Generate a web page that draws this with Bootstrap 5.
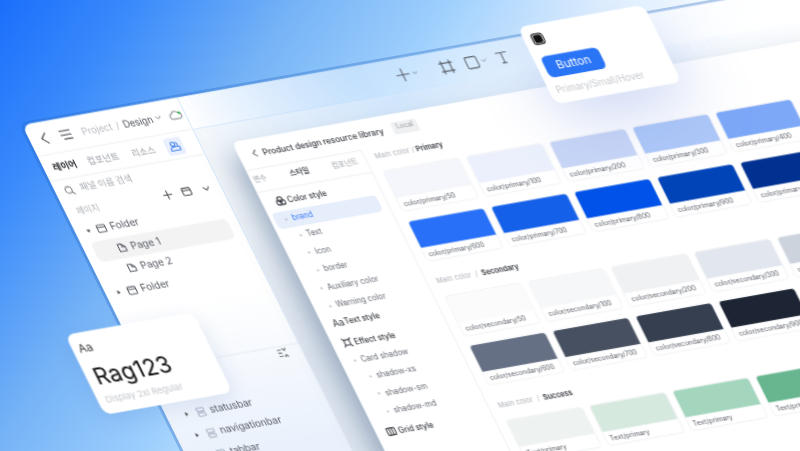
<!DOCTYPE html>
<html lang="ko">
<head>
<meta charset="UTF-8">
<meta name="viewport" content="width=device-width, initial-scale=1">
<title>Design system</title>
<link href="https://cdn.jsdelivr.net/npm/bootstrap@5.3.0/dist/css/bootstrap.min.css" rel="stylesheet">
<style>
html, body { margin: 0; height: 100%; }
body {
    width: 800px; height: 451px; overflow: hidden; position: relative;
    font-family: "Inter", "Noto Sans CJK KR", sans-serif; color: #3c4048;
    background: linear-gradient(124deg, #1b6efb 0%, #3c8cfb 13%, #76b3f6 27%, #9fd0fd 41%, #e2f1ff 55%, #fff 72%);
}
svg { display: block; flex: none; fill: none; stroke: currentColor; stroke-width: 1; stroke-linecap: round; stroke-linejoin: round; }

/* the whole picture is one skewed canvas */
.scene { position: absolute; left: 22px; top: 125px; width: 0; height: 0; transform-origin: 0 0; transform: matrix(1, -.1775, .495, 1, 0, 0); filter: blur(.35px); }

.win { position: absolute; left: 0; top: 0; width: 1000px; height: 560px; display: flex; border-radius: 8px; box-shadow: 0 0 0 3px rgba(30, 95, 190, .32); }
.side { width: 155px; flex: none; background: linear-gradient(180deg, #fff 0, #fff 190px, #e9f1fc 340px); border-radius: 8px 0 0 8px; }
.side-head { height: 32px; padding-left: 10px; border-bottom: 1px solid #f0f1f3; font-size: 9px; color: #4b4f57; }
.side-tabs { height: 25px; padding-left: 9px; border-bottom: 1px solid #f0f1f3; font-size: 8.5px; color: #9da1a8; }
.side-tabs b { color: #23262b; font-weight: 600; }
.side-search { height: 21px; padding-left: 9px; font-size: 8.5px; color: #a8abb1; }
.side-actions { height: 20px; padding: 0 10px 0 11px; font-size: 8px; color: #b0b3b9; white-space: nowrap; }
.tree-row { height: 20.5px; font-size: 9.5px; color: #555961; }
.tri { width: 0; height: 0; border-left: 2px solid transparent; border-right: 2px solid transparent; border-top: 3px solid #555; margin-right: 6px; flex: none; }
.tri-r { transform: rotate(-90deg); }
.tree-on { background: #f3f3f4; border-radius: 5px; margin: 0 10px 0 9px; }
.side-low { margin-top: 65px; border-top: 1px solid #e8edf4; padding-top: 28px; }
.low-row { height: 21px; padding-left: 18px; font-size: 9.5px; color: #555961; }
.low-icon { color: #a9b2c2; }

.main-col { flex: 1; min-width: 0; display: flex; flex-direction: column; }
.toolbar { height: 32px; flex: none; padding-left: 211px; color: #555b63; background: linear-gradient(90deg, #fff 0, rgba(255, 255, 255, .45) 170px, rgba(255, 255, 255, .42) 420px, #fff 640px); }
.stage { flex: 1; min-height: 0; padding: 18px 0 0 30px; background: linear-gradient(180deg, rgba(222, 230, 240, 0) 0, #dde5ef 230px), linear-gradient(90deg, #f5f8fb 0, rgba(226, 238, 252, .75) 200px, rgba(236, 244, 253, .75) 420px, #fff 640px); }

.lib { width: 640px; height: 500px; background: #fff; border-radius: 6px 0 0 0; box-shadow: -8px 14px 24px rgba(80, 105, 140, .5); }
.lib-head { height: 28px; padding-left: 13px; font-size: 8px; font-weight: 500; color: #33363c; }
.tag-local { background: #eff0f2; color: #9a9da4; font-size: 6.5px; font-weight: 400; padding: 1px 4px; border-radius: 2px; margin-left: 10px; }
.lib-box { margin-left: auto; margin-right: 45px; width: 14px; height: 14px; border: 1px solid #e4e6ea; border-radius: 2px; }
.lib-side { width: 116px; flex: none; border-top: 1px solid #f0f1f3; border-right: 1px solid #f0f1f3; font-size: 7.5px; color: #6a6e76; }
.lib-tabs { height: 22px; padding: 0 8px 0 3px; border-bottom: 1px solid #f0f1f3; font-size: 7px; color: #a0a3a9; margin-bottom: 2.5px; }
.lib-tabs b { font-weight: 500; color: #2d3036; }
.style-row { height: 17.4px; padding-left: 13px; }
.style-head { color: #33363c; font-weight: 500; }
.style-head svg { margin-right: 2px; }
.tri-sm { width: 2px; height: 2px; border-radius: 50%; background: #b8bbc1; margin-right: 5px; flex: none; }
.sub1 { padding-left: 20px; }
.style-on { background: #e6eefc; color: #3b7cf5; border-radius: 4px; margin: 0 7px 0 4px; padding-left: 10px; height: 16px; margin-top: .7px; margin-bottom: .7px; }

.lib-main { padding-left: 9px; }
.sec-label { height: 14px; font-size: 7px; color: #b2b5bb; margin-bottom: 7px; margin-top: 2px; }
.sec-label b { font-weight: 600; color: #33363c; }
.sec-gap { margin-top: 13px; }
.tile-grid { display: grid; grid-template-columns: repeat(5, 77px); gap: 8.5px 6px; }
.tile { height: 41px; background: #fff; border: 1px solid #f3f4f6; border-radius: 4px; overflow: hidden; font-size: 6.5px; color: #5c6068; }
.tile i { display: block; height: 27px; margin: -1px -1px 0; }
.tile span { display: block; padding: 3px 0 0 4px; white-space: nowrap; }

.float { position: absolute; background: #fff; border-radius: 8px; }
.rag { left: -56px; top: 200px; width: 128px; height: 80px; padding: 9px 8px; box-shadow: 0 6px 20px rgba(60, 100, 170, .14); }
.rag-aa { font-size: 11px; line-height: 13px; color: #333; margin-left: -2px; }
.rag-big { font-size: 22px; line-height: 30px; color: #111; margin-top: 6px; }
.rag-sub { font-size: 8.5px; color: #c4c7cc; margin-top: 2px; white-space: nowrap; }
.btn-card { left: 500px; top: -9px; width: 126px; height: 77px; padding: 8px 7px; box-shadow: 0 22px 60px rgba(110, 140, 225, .32); }
.btn-demo { background: #2a74f6; border: 0; color: #fff; font-size: 11px; width: 57px; height: 21px; padding: 0; border-radius: 5px; margin-top: 11px; display: block; }
.btn-sub { font-size: 9px; color: #c6c9ce; margin-top: 5px; white-space: nowrap; }
</style>
</head>
<body>

<svg width="0" height="0" style="position:absolute">
    <symbol id="ico-folder" viewBox="0 0 10 10"><path d="M1 2.5a1 1 0 0 1 1-1h6a1 1 0 0 1 1 1v5a1 1 0 0 1-1 1H2a1 1 0 0 1-1-1zM1 3.8h8"/></symbol>
    <symbol id="ico-page" viewBox="0 0 10 10"><path d="M2 1.5h3.5L8.5 4.5v4h-6.5zM5.5 1.5v3h3"/></symbol>
    <symbol id="ico-bars" viewBox="0 0 10 10"><rect x="1.5" y="1" width="7" height="3.2" rx=".8"/><rect x="1.5" y="5.8" width="7" height="3.2" rx=".8"/></symbol>
    <symbol id="ico-down" viewBox="0 0 10 10"><path d="M2 3.5l3 3 3-3"/></symbol>
</svg>

<div class="scene">
    <div class="win">
        <!-- left panel -->
        <div class="side">
            <div class="side-head d-flex align-items-center">
                <svg width="9" height="12" viewBox="0 0 9 12" style="color:#33363c"><path d="M7 1L2 6l5 5"/></svg>
                <svg width="12" height="10" viewBox="0 0 12 10" style="margin-left:11px;color:#33363c"><path d="M1 1h10M1 5h10M3 9h8"/></svg>
                <span style="margin-left:10px;color:#b7bac0">Project</span>
                <span style="margin-left:4px;color:#b7bac0">/</span>
                <span style="margin-left:4px">Design</span>
                <svg width="7" height="7" viewBox="0 0 10 10" style="margin-left:2px"><use href="#ico-down"/></svg>
                <svg width="13" height="10" viewBox="0 0 13 10" style="margin-left:7px;color:#8f939a"><path d="M3.5 8.5a2.5 2.5 0 0 1-.3-5 3.2 3.2 0 0 1 6-.6 2.8 2.8 0 0 1 .3 5.6z"/><circle cx="10.8" cy="3.2" r="1.2" fill="#37b24d" stroke="none"/></svg>
            </div>
            <div class="side-tabs d-flex align-items-center">
                <b>레이어</b>
                <span style="margin-left:11px">컴포넌트</span>
                <span style="margin-left:13px">리소스</span>
                <span class="d-flex align-items-center justify-content-center" style="margin-left:11px;width:17px;height:17px;border-radius:3px;background:#e9f0fd;color:#3d7ff0">
                    <svg width="11" height="11" viewBox="0 0 11 11"><circle cx="4.5" cy="3.2" r="2"/><path d="M1 9.5c0-2 1.2-3.5 3.5-3.5h5.5v3.5zM7.5 2a2 2 0 0 1 1 2.8"/></svg>
                </span>
            </div>
            <div class="side-search d-flex align-items-center">
                <svg width="10" height="10" viewBox="0 0 10 10" style="color:#777"><circle cx="4.3" cy="4.3" r="3.2"/><path d="M6.8 6.8L9 9"/></svg>
                <span style="margin-left:6px">패널 이름 검색</span>
            </div>
            <div class="side-actions d-flex align-items-center">
                <span>페이지</span>
                <svg width="10" height="10" viewBox="0 0 10 10" style="margin-left:64px;color:#444"><path d="M5 1v8M1 5h8"/></svg>
                <svg width="10" height="10" viewBox="0 0 10 10" style="margin-left:9px;color:#444"><use href="#ico-folder"/></svg>
                <svg width="9" height="9" viewBox="0 0 10 10" style="margin-left:10px;color:#444"><use href="#ico-down"/></svg>
            </div>
            <div class="tree-row d-flex align-items-center" style="padding-left:11px"><span class="tri"></span><svg width="10" height="10" viewBox="0 0 10 10" class="me-1"><use href="#ico-folder"/></svg>Folder</div>
            <div class="tree-row tree-on d-flex align-items-center" style="padding-left:22px"><svg width="10" height="10" viewBox="0 0 10 10" class="me-1"><use href="#ico-page"/></svg>Page 1</div>
            <div class="tree-row d-flex align-items-center" style="padding-left:31px"><svg width="10" height="10" viewBox="0 0 10 10" class="me-1"><use href="#ico-page"/></svg>Page 2</div>
            <div class="tree-row d-flex align-items-center" style="padding-left:11px"><span class="tri tri-r"></span><svg width="10" height="10" viewBox="0 0 10 10" class="me-1"><use href="#ico-folder"/></svg>Folder</div>
            <div class="side-low">
                <svg width="10" height="10" viewBox="0 0 10 10" style="position:absolute;left:131px;top:247px;color:#666"><path d="M1 2h3M1 5h3M1 8h3M6 1l1.5 2L9 1M6 9l1.5-2L9 9"/></svg>
                <div style="height:8px"></div>
                <div class="low-row d-flex align-items-center"><span class="tri tri-r" style="margin-right:7px"></span><svg width="10" height="10" viewBox="0 0 10 10" class="low-icon me-1"><use href="#ico-bars"/></svg>statusbar</div>
                <div class="low-row d-flex align-items-center"><span class="tri tri-r" style="margin-right:7px"></span><svg width="10" height="10" viewBox="0 0 10 10" class="low-icon me-1"><use href="#ico-bars"/></svg>navigationbar</div>
                <div class="low-row d-flex align-items-center"><span class="tri tri-r" style="margin-right:7px"></span><svg width="10" height="10" viewBox="0 0 10 10" class="low-icon me-1"><use href="#ico-bars"/></svg>tabbar</div>
            </div>
        </div>

        <div class="main-col">
            <div class="toolbar d-flex align-items-center">
                <svg width="14" height="14" viewBox="0 0 14 14"><path d="M7 1v12M1 7h12"/></svg>
                <svg width="6" height="6" viewBox="0 0 10 10" style="margin-left:2px"><use href="#ico-down"/></svg>
                <svg width="14" height="14" viewBox="0 0 14 14" style="margin-left:22px"><path d="M3 .8v12.4M11 .8v12.4M.8 3h12.4M.8 11h12.4" stroke-width="1.1"/></svg>
                <svg width="14" height="14" viewBox="0 0 14 14" style="margin-left:11px"><rect x="1.5" y="1.5" width="11" height="11" rx="1.5"/></svg>
                <svg width="6" height="6" viewBox="0 0 10 10" style="margin-left:2px"><use href="#ico-down"/></svg>
                <svg width="13" height="13" viewBox="0 0 13 13" style="margin-left:9px"><path d="M1.5 1.5h10M6.5 1.5v10M4.5 11.5h4"/></svg>
            </div>
            <div class="stage">
                <div class="lib">
                    <div class="lib-head d-flex align-items-center">
                        <svg width="6" height="8" viewBox="0 0 6 8" style="margin-right:5px;color:#666"><path d="M4.5 1L1.5 4l3 3"/></svg>
                        <span>Product design resource library</span>
                        <span class="tag-local">Local</span>
                        <span class="lib-box"></span>
                    </div>
                    <div class="d-flex">
                        <div class="lib-side">
                            <div class="lib-tabs d-flex align-items-center justify-content-between">
                                <span>변수</span><b>스타일</b><span>컴포넌트</span>
                            </div>
                            <div class="style-row style-head d-flex align-items-center">
                                <svg width="10" height="10" viewBox="0 0 10 10" stroke-width=".8"><circle cx="5" cy="3.4" r="2.4"/><circle cx="3.2" cy="6.4" r="2.4"/><circle cx="6.8" cy="6.4" r="2.4"/></svg>Color style
                            </div>
                            <div class="style-row style-on d-flex align-items-center"><span class="tri-sm"></span>brand</div>
                            <div class="style-row sub1 d-flex align-items-center"><span class="tri-sm"></span>Text</div>
                            <div class="style-row sub1 d-flex align-items-center"><span class="tri-sm"></span>Icon</div>
                            <div class="style-row sub1 d-flex align-items-center"><span class="tri-sm"></span>border</div>
                            <div class="style-row d-flex align-items-center" style="padding-left:15px"><span class="tri-sm"></span>Auxiliary color</div>
                            <div class="style-row d-flex align-items-center" style="padding-left:15px"><span class="tri-sm"></span>Warning color</div>
                            <div class="style-row style-head d-flex align-items-center"><span style="font-size:9px;font-weight:400;margin-right:2px;width:10px;margin-left:-3px">Aa</span>Text style</div>
                            <div class="style-row style-head d-flex align-items-center" style="margin-top:2px">
                                <svg width="10" height="10" viewBox="0 0 10 10" stroke-width=".8" style="margin-left:-3px"><path d="M2.5 2.5h5v5h-5zM1 1l1.5 1.5M9 1L7.5 2.5M1 9l1.5-1.5M9 9L7.5 7.5"/></svg>Effect style
                            </div>
                            <div class="style-row d-flex align-items-center" style="padding-left:13px"><span class="tri-sm"></span>Card shadow</div>
                            <div class="style-row sub1 d-flex align-items-center"><span class="tri-sm"></span>shadow-xs</div>
                            <div class="style-row sub1 d-flex align-items-center"><span class="tri-sm"></span>shadow-sm</div>
                            <div class="style-row sub1 d-flex align-items-center"><span class="tri-sm"></span>shadow-md</div>
                            <div class="style-row style-head d-flex align-items-center" style="margin-top:2px">
                                <svg width="10" height="10" viewBox="0 0 10 10" stroke-width=".8" style="margin-left:-3px"><rect x="1" y="1.5" width="8" height="7" rx="1"/><path d="M3.7 1.5v7M6.3 1.5v7"/></svg>Grid style
                            </div>
                        </div>

                        <div class="lib-main flex-grow-1">
                            <div class="sec-label d-flex align-items-center">Main color&nbsp;/&nbsp;<b>Primary</b></div>
                            <div class="tile-grid">
                                <div class="tile"><i style="background:#f4f6fb"></i><span>color/primary/50</span></div>
                                <div class="tile"><i style="background:#ebf0fc"></i><span>color/primary/100</span></div>
                                <div class="tile"><i style="background:#c8d6f6"></i><span>color/primary/200</span></div>
                                <div class="tile"><i style="background:#aec8f8"></i><span>color/primary/300</span></div>
                                <div class="tile"><i style="background:#7da8f8"></i><span>color/primary/400</span></div>
                                <div class="tile"><i style="background:#2870f8"></i><span>color/primary/600</span></div>
                                <div class="tile"><i style="background:#1560e8"></i><span>color/primary/700</span></div>
                                <div class="tile"><i style="background:#0052e8"></i><span>color/primary/800</span></div>
                                <div class="tile"><i style="background:#0044b8"></i><span>color/primary/900</span></div>
                                <div class="tile"><i style="background:#003090"></i><span>color/primary/950</span></div>
                            </div>
                            <div class="sec-label sec-gap d-flex align-items-center">Main color&nbsp;&nbsp;/&nbsp;&nbsp;<b>Secondary</b></div>
                            <div class="tile-grid">
                                <div class="tile"><i style="background:#fbfbfb"></i><span>color/secondary/50</span></div>
                                <div class="tile"><i style="background:#f6f7f8"></i><span>color/secondary/100</span></div>
                                <div class="tile"><i style="background:#eff1f3"></i><span>color/secondary/200</span></div>
                                <div class="tile"><i style="background:#e2e6ee"></i><span>color/secondary/300</span></div>
                                <div class="tile"><i style="background:#ccd3dd"></i><span>color/secondary/400</span></div>
                                <div class="tile"><i style="background:#667085"></i><span>color/secondary/600</span></div>
                                <div class="tile"><i style="background:#475060"></i><span>color/secondary/700</span></div>
                                <div class="tile"><i style="background:#353f50"></i><span>color/secondary/800</span></div>
                                <div class="tile"><i style="background:#1d2434"></i><span>color/secondary/900</span></div>
                            </div>
                            <div class="sec-label sec-gap d-flex align-items-center">Main color&nbsp;&nbsp;/&nbsp;&nbsp;<b>Success</b></div>
                            <div class="tile-grid">
                                <div class="tile"><i style="background:#eef2f0"></i><span>Text/primary</span></div>
                                <div class="tile"><i style="background:#d6e9df"></i><span>Text/primary</span></div>
                                <div class="tile"><i style="background:#a3d6bd"></i><span>Text/primary</span></div>
                                <div class="tile"><i style="background:#67b68f"></i><span>Text/primary</span></div>
                            </div>
                        </div>
                    </div>
                </div>
            </div>
        </div>
    </div>

    <!-- floating cards -->
    <div class="float rag">
        <div class="rag-aa">Aa</div>
        <div class="rag-big">Rag123</div>
        <div class="rag-sub">Display 2xl Regular</div>
    </div>
    <div class="float btn-card">
        <svg width="13" height="12" viewBox="0 0 13 12" style="color:#111"><rect x="1" y="1" width="11" height="10" rx="3"/><rect x="2.8" y="2.6" width="7.4" height="6.8" rx="1.5" fill="#111"/></svg>
        <button type="button" class="btn-demo">Button</button>
        <div class="btn-sub">Primary/Small/Hover</div>
    </div>
</div>

<script src="https://cdn.jsdelivr.net/npm/bootstrap@5.3.0/dist/js/bootstrap.bundle.min.js"></script>
</body>
</html>
